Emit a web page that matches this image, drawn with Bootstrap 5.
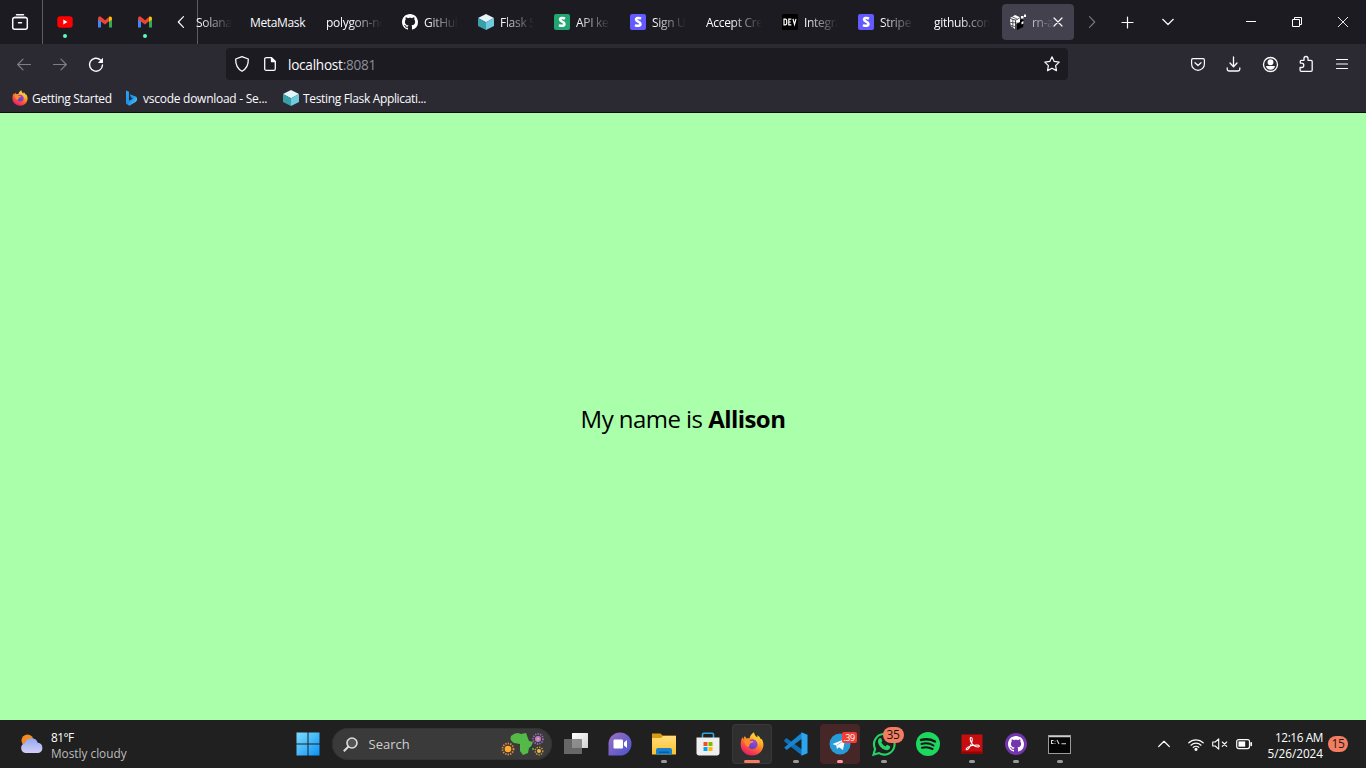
<!DOCTYPE html>
<html lang="en">
<head>
<meta charset="utf-8">
<title>localhost:8081</title>
<meta name="viewport" content="width=device-width, initial-scale=1">
<link href="https://cdn.jsdelivr.net/npm/bootstrap@5.3.0/dist/css/bootstrap.min.css" rel="stylesheet">
<style>
body{font-family:"Open Sans","Noto Sans",sans-serif;font-size:12px;line-height:16px;color:#fbfbfe;background:#afa;height:768px}
svg{display:block;flex:none;overflow:visible}
.ln{fill:none;stroke:#fbfbfe;stroke-width:1.2;stroke-linecap:round;stroke-linejoin:round}
.dim{opacity:.4}
.tabstrip{height:44px;background:#1c1b22}
.overview{width:43px;border-right:1px solid #5b5b60;padding-right:3px}
.pin{width:40px}
.pin i{position:absolute;left:18px;top:34px;width:4px;height:4px;border-radius:50%;background:#54ffbd}
.scroll-l{width:32px}
.pins{padding-left:2px}
.tabs{width:878px;border-left:1px solid #5b5b60}
.tab-item{width:72px;height:36px;margin:0 2px;padding:0 8px;border-radius:4px;gap:6px;flex:none}
.tab-item.first{width:36px;margin-left:-2px;padding:0;margin-right:3px}
.tab-item.active{background:#42414d}
.lbl{overflow:hidden;white-space:nowrap;flex:1 1 0;min-width:0;letter-spacing:-.3px;padding-top:1px}
.fade-r{-webkit-mask-image:linear-gradient(to left,transparent 0,#000 32px);mask-image:linear-gradient(to left,transparent 0,#000 32px)}
.ctl{width:46px}
.toolbar{height:40px;background:#2b2a33;padding:0 6px}
.tool{width:36px;height:36px}
.urlbar{width:842px;height:32px;background:#1c1b22;border-radius:4px;margin-left:112px;margin-right:112px}
.url{font-size:13.6px;letter-spacing:-.25px;font-weight:400;padding-top:1px}
.url span{color:#8f8f98}
.bookmarks{height:29px;background:#2b2a33;border-bottom:1px solid #0c0c0d;padding-left:12px}
.bm{gap:4px;white-space:nowrap;letter-spacing:-.34px}
.bm span{padding-top:2px}
.stage{height:607px;background:#afa;color:#000;font-size:24px;line-height:32px;padding-top:4px;letter-spacing:-.55px}
.taskbar{height:48px;background:#202020;color:#fff}
.app{width:40px;height:40px;border-radius:4px;position:relative}
.app.on{background:#2f2f2f;box-shadow:inset 0 0 0 1px #383838}
.app.alert-on{background:#472627}
.app.run::after{content:"";position:absolute;left:17px;top:36px;width:6px;height:3px;border-radius:2px;background:#9a9a9a}
.app.on::after{left:12px;width:16px;background:#f47d61}
.app.alert-on::after{background:#ff99a4}
.weather{width:287.5px;padding-left:20px;gap:7px;font-size:11.8px}
.weather .deg{letter-spacing:-.5px}
.weather .txt,.clock{padding-top:2px}
.weather .sub{color:#bdbdbd}
.search{width:220px;height:32px;border-radius:16px;background:#3a3a3a;box-shadow:inset 0 0 0 1px #333;padding:0 7px 0 11px;font-size:13px;color:#cfcfcf}
.cnt{position:absolute;font-size:12px;line-height:16px;color:#111;background:#f47d61;border-radius:8px;text-align:center;letter-spacing:-.4px}
.cnt.wa{left:19px;top:3px;width:21px}
.cnt.tg{left:22px;top:8px;width:15px;height:11px;line-height:11px;border-radius:2px;background:#f23c34;color:#fff;font-size:9px}
.clock{font-size:11.8px;width:76px;text-align:right;white-space:nowrap;letter-spacing:-.05px}
.clock .time{letter-spacing:-.4px}
.noti{width:20px;height:16px;border-radius:8px;background:#f47d61;color:#1a1a1a;font-size:12px;letter-spacing:-.4px;line-height:16px;text-align:center}
</style>
</head>
<body class="overflow-hidden d-flex flex-column">
<svg width="0" height="0" class="position-absolute" aria-hidden="true">
<defs>
<linearGradient id="ffo" x1=".85" y1="0" x2=".3" y2="1"><stop offset="0" stop-color="#fff14f"/><stop offset=".35" stop-color="#ffb01f"/><stop offset=".65" stop-color="#ff5a36"/><stop offset="1" stop-color="#e3186e"/></linearGradient>
<linearGradient id="ffp" x1=".7" y1="0" x2=".3" y2="1"><stop offset="0" stop-color="#a34bd8"/><stop offset="1" stop-color="#5940c8"/></linearGradient>
<linearGradient id="win" x1="0" y1="0" x2="1" y2="1"><stop offset="0" stop-color="#7fdcff"/><stop offset="1" stop-color="#0a93f5"/></linearGradient>
<linearGradient id="cl" x1="0" y1="0" x2="0" y2="1"><stop offset="0" stop-color="#8fa9f0"/><stop offset="1" stop-color="#d6cdf8"/></linearGradient>
<linearGradient id="tv" x1="0" y1="0" x2="1" y2="1"><stop offset="0" stop-color="#fff"/><stop offset="1" stop-color="#d0d0d0"/></linearGradient>
<linearGradient id="chat" x1="0" y1="0" x2="1" y2="1"><stop offset="0" stop-color="#9c6fc0"/><stop offset="1" stop-color="#4854cf"/></linearGradient>
<linearGradient id="fold" x1="0" y1="0" x2="0" y2="1"><stop offset="0" stop-color="#ffdd79"/><stop offset="1" stop-color="#fbc02e"/></linearGradient>
<linearGradient id="bing" x1="0" y1="0" x2="1" y2="1"><stop offset="0" stop-color="#2aa7f7"/><stop offset=".5" stop-color="#1f8fee"/><stop offset="1" stop-color="#4fe3e0"/></linearGradient>
<symbol id="firefox" viewBox="0 0 24 24"><path fill="url(#ffo)" d="M12 23.500C5.500 23.500.7 18.800.7 12.500c0-3.300.7-5.500 1.900-7.500l.7 2.200L4.800 4l1.700 2.500c1-.4 2-.4 3-.1.400-2.300 2-4.700 4.500-6.100.2 2.100 1.300 3.600 3.300 5.100.2-.8.100-1.400-.1-2.200 1.900 1 3 2.400 3.700 4.100l.9-.3c1.100 2 1.600 3.800 1.600 5.700C23.400 18.900 18.300 23.500 12 23.500z"/><circle cx="12.500" cy="12.300" r="5" fill="url(#ffp)"/><path fill="#ff8b2d" d="M4.500 8.500c2.400-1 4.700-.6 6.200.4l2.600.2c.2 1.600-1.800 2-3.100 2.500-.9.500-.4 2.400-1.500 3.400C6.500 14.500 4.200 12 4.500 8.500z"/><path fill="#ffc52e" d="M14 2.500c.7 4.500 6.500 5 4.700 11.200-.4-3.400-2-5.700-4.700-6.400-1.200-1.200-1-3.400 0-4.800z"/></symbol>
<symbol id="gmail" viewBox="0 0 16 12"><path fill="#4285f4" d="M1 2v9.500h3V5z"/><path fill="#34a853" d="M15 2v9.500h-3V5z"/><path fill="#ea4335" d="M1 2.800C1 .5 3 .2 4.100 1L8 4.200 12 1v4.300L8 8.400 1 3.400z"/><path fill="#fbbc04" d="M12 1c1.300-1 3-.3 3 1.500v1L12 6z"/></symbol>
<symbol id="cube" viewBox="0 0 16 16"><path fill="#e2f5fb" d="M8 0 16 4 8 8.300 0 4z"/><path fill="#399fa8" d="M0 4l8 4.300V16L0 12z"/><path fill="#6fcbdc" d="M16 4 8 8.300V16l8-4z"/></symbol>
<symbol id="octo" viewBox="0 0 16 16"><path fill="#fff" d="M8 0C3.580 0 0 3.580 0 8c0 3.540 2.290 6.530 5.470 7.590.4.070.55-.17.55-.38 0-.19-.01-.82-.01-1.490-2.010.37-2.530-.49-2.690-.94-.09-.23-.48-.94-.82-1.130-.28-.15-.68-.52-.01-.53.63-.01 1.080.58 1.230.82.72 1.210 1.870.87 2.330.66.07-.52.28-.87.51-1.070-1.780-.2-3.640-.89-3.640-3.950 0-.87.31-1.590.82-2.150-.08-.2-.36-1.020.08-2.120 0 0 .67-.21 2.200.82.64-.18 1.320-.27 2-.27s1.360.09 2 .27c1.530-1.040 2.200-.82 2.200-.82.44 1.100.16 1.920.08 2.120.51.56.82 1.270.82 2.150 0 3.070-1.870 3.750-3.650 3.950.29.25.54.73.54 1.480 0 1.070-.01 1.930-.01 2.200 0 .21.15.46.55.38A8.010 8.010 0 0 0 16 8c0-4.420-3.580-8-8-8z"/></symbol>
<symbol id="sletter" viewBox="0 0 16 16"><rect width="16" height="16" rx="2"/><path fill="none" stroke="#fff" stroke-width="2.500" d="M11 4.700C9 3.600 6 3.700 6 5.600c0 2.200 4.500 1.900 4.500 4.400 0 2.200-3.300 2.200-5.500 1.100"/></symbol>
</defs></svg>

<header class="tabstrip d-flex align-items-center">
 <div class="overview h-100 d-flex align-items-center justify-content-center"><svg width="16" height="16" class="ln" style="stroke-width:1.500"><path d="M4.500.7h7M2.500 3.500h11"/><rect x=".7" y="3.500" width="14.600" height="11.700" rx="2"/><path d="M6.500 8.800h3"/></svg></div>
 <div class="pins d-flex h-100">
  <div class="pin position-relative d-flex align-items-center justify-content-center"><svg width="16" height="12"><rect x=".3" y=".2" width="15.400" height="11.600" rx="3" fill="#f00"/><path fill="#fff" d="M6.300 3.500v5L10.500 6z"/></svg><i></i></div>
  <div class="pin d-flex align-items-center justify-content-center"><svg width="16" height="12"><use href="#gmail"/></svg></div>
  <div class="pin position-relative d-flex align-items-center justify-content-center"><svg width="16" height="12"><use href="#gmail"/></svg><i></i></div>
 </div>
 <div class="scroll-l d-flex justify-content-center"><svg width="8" height="12" class="ln"><path d="M6.500.7 1.300 6l5.200 5.300"/></svg></div>
 <nav class="tabs d-flex align-items-center h-100">
  <div class="tab-item first d-flex align-items-center"><span class="lbl fade-r">Solana</span></div>
  <div class="tab-item d-flex align-items-center" style="margin-left:7px"><span class="lbl" style="letter-spacing:-.35px">MetaMask</span></div>
  <div class="tab-item d-flex align-items-center"><span class="lbl fade-r">polygon-node</span></div>
  <div class="tab-item d-flex align-items-center"><svg width="16" height="16"><use href="#octo"/></svg><span class="lbl fade-r">GitHub</span></div>
  <div class="tab-item d-flex align-items-center"><svg width="16" height="16"><use href="#cube"/></svg><span class="lbl fade-r">Flask Stripe</span></div>
  <div class="tab-item d-flex align-items-center"><svg width="16" height="16" fill="#22a671"><use href="#sletter"/></svg><span class="lbl fade-r">API keys</span></div>
  <div class="tab-item d-flex align-items-center"><svg width="16" height="16" fill="#635bff"><use href="#sletter"/></svg><span class="lbl fade-r">Sign Up</span></div>
  <div class="tab-item d-flex align-items-center"><span class="lbl fade-r">Accept Credit</span></div>
  <div class="tab-item d-flex align-items-center"><svg width="16" height="16"><rect width="16" height="16" rx="1"/><path fill="none" stroke="#fff" stroke-width="1.200" d="M2 5.200v5.600h1.200q1.500 0 1.500-1.500V6.700q0-1.500-1.500-1.500zM9.300 5.200H6.800v5.600h2.500M6.800 8h2M11 4.800l1.500 5.700L14 4.800"/></svg><span class="lbl fade-r">Integrate</span></div>
  <div class="tab-item d-flex align-items-center"><svg width="16" height="16" fill="#635bff"><use href="#sletter"/></svg><span class="lbl fade-r">Stripe API</span></div>
  <div class="tab-item d-flex align-items-center"><span class="lbl fade-r">github.com</span></div>
  <div class="tab-item active d-flex align-items-center"><svg width="16" height="16"><path fill="#000" d="M7 8l5-3 2 2-1 6-6 3z"/><path fill="#fff" d="M0 4 5 1l5 2.200-4 2.600zM0 5l5 1.600V15L.7 12zM6 6.600 10 4v4L6 10zM11 2h2.500v2.500H11zM14 .5h2V3h-2zM11.500 8l2-1v2.500l-2 1z"/><path stroke="#222" stroke-width=".7" fill="none" d="M.3 8.400l9.500 1M2.800 5.600v8M2 2.700l5.500 2.500M0 11l5 1.600"/></svg><span class="lbl fade-r" style="margin-right:-8px">rn-a</span><svg width="10" height="10" class="ln" style="margin-right:3px"><path d="M1 1l8 8M9 1 1 9"/></svg></div>
 </nav>
 <div class="d-flex justify-content-center dim" style="width:34px"><svg width="8" height="12" class="ln"><path d="M1.500.7 6.700 6l-5.200 5.300"/></svg></div>
 <div class="d-flex justify-content-center" style="width:38px"><svg width="12" height="12" class="ln" style="margin-top:1px"><path d="M5.500 0v11M0 5.500h11"/></svg></div>
 <div class="d-flex justify-content-center" style="width:42px"><svg width="12" height="8" class="ln"><path d="M.7 1.300 6 6.500l5.300-5.200"/></svg></div>
 <div class="ms-auto d-flex">
  <div class="ctl d-flex justify-content-center"><svg width="10" height="10" stroke="#fff"><path d="M0 4.500h10"/></svg></div>
  <div class="ctl d-flex justify-content-center"><svg width="10" height="10" stroke="#fff" fill="none"><path d="M.5 2.500h7v7h-7zM2.500 2.500v-2h7v7h-2"/></svg></div>
  <div class="ctl d-flex justify-content-center"><svg width="10" height="10" stroke="#fff" stroke-width=".9"><path d="M0 0l10 10M10 0 0 10"/></svg></div>
 </div>
</header>

<div class="toolbar d-flex align-items-center">
 <div class="tool dim d-flex align-items-center justify-content-center"><svg width="14" height="12" class="ln"><path d="M13.500 6.500H.7M6 1.200.7 6.500 6 11.800"/></svg></div>
 <div class="tool dim d-flex align-items-center justify-content-center"><svg width="14" height="12" class="ln"><path d="M.5 6.500h12.800M8 1.200l5.300 5.300L8 11.800"/></svg></div>
 <div class="tool d-flex align-items-center justify-content-center"><svg width="14" height="14" class="ln" style="stroke-width:1.400"><path d="M13.500 8A6.500 6.500 0 1 1 11.500 3"/><path fill="#fbfbfe" stroke="none" d="M14 .8v5.200H8.800z"/></svg></div>
 <div class="urlbar d-flex align-items-center">
  <svg width="14" height="16" class="ln" style="margin-left:9px;stroke-width:1.300"><path d="M7 .7 13.300 3c.2 5.500-1.300 9.500-6.300 12.300C2 12.500.5 8.500.7 3z"/></svg>
  <svg width="12" height="14" class="ln" style="margin-left:15px;stroke-width:1.300"><path d="M2.500.7h5L11.300 4.500v7.200q0 1.600-1.600 1.600H2.300Q.7 13.300.7 11.700V2.300Q.7.7 2.500.7z"/><path fill="#fbfbfe" d="M7.500 1v3.500H11z"/></svg>
  <div class="url" style="margin-left:12px">localhost<span>:8081</span></div>
  <svg width="16" height="16" class="ln ms-auto me-2"><path d="M8 .8l2.200 4.600 5 .7-3.600 3.500.9 5L8 12.200l-4.500 2.400.9-5L.8 6.100l5-.7z"/></svg>
 </div>
 <div class="tool d-flex align-items-center justify-content-center"><svg width="14" height="13" class="ln"><path d="M1.800.7h10.400q1.200 0 1.200 1.200v4a6.400 6.400 0 0 1-12.800 0v-4Q.6.7 1.800.7zM4 4.700l3 2.800 3-2.800"/></svg></div>
 <div class="tool d-flex align-items-center justify-content-center"><svg width="14" height="15" class="ln" style="stroke-width:1.300"><path d="M6.500 0v9.500M3 6l3.500 3.700L10 6M.2 11v1.200q0 1.800 1.800 1.800h9q1.800 0 1.800-1.800V11"/></svg></div>
 <div class="tool d-flex align-items-center justify-content-center"><svg width="16" height="16" class="ln" style="stroke-width:1.300"><circle cx="8.500" cy="8.500" r="7"/><circle cx="8.500" cy="6.200" r="2.300" fill="#fbfbfe"/><path fill="#fbfbfe" stroke="none" d="M4 10h9q-.8 3.800-4.500 3.800T4 10z"/></svg></div>
 <div class="tool d-flex align-items-center justify-content-center"><svg width="14" height="16" class="ln" style="stroke-width:1.300"><path d="M1.300 7V5.200Q1.300 4.300 2.200 4.300H5V2.500a2 2 0 0 1 4 0V4.300h3q1.200 0 1.200 1.200v8.600q0 1.200-1.200 1.200H2.300Q1.100 15.300 1.100 14v-2.500h1.500a2.200 2.200 0 0 0 0-4.400z"/></svg></div>
 <div class="tool d-flex align-items-center justify-content-center"><svg width="12" height="10" class="ln" style="stroke-width:1.200"><path d="M.5.500h11M.5 5h11M.5 9.500h11"/></svg></div>
</div>

<div class="bookmarks d-flex align-items-center">
 <div class="bm d-flex align-items-center" style="width:111px"><svg width="16" height="16"><use href="#firefox"/></svg><span>Getting Started</span></div>
 <div class="bm d-flex align-items-center" style="width:160px;letter-spacing:-.26px"><svg width="16" height="16"><path fill="url(#bing)" d="M3 .5l3 1.200v9l4-2.200-2-1-1.200-3.200 6 2.200q1.700.8 1.300 3.300-.2 1.500-1.500 2.200L6.300 15.700 3 13.500z"/></svg><span>vscode download - Se...</span></div>
 <div class="bm d-flex align-items-center"><svg width="16" height="16"><use href="#cube"/></svg><span>Testing Flask Applicati...</span></div>
</div>

<main class="stage d-flex align-items-center justify-content-center"><div>My name is <strong>Allison</strong></div></main>

<footer class="taskbar d-flex align-items-center">
 <div class="weather d-flex align-items-center">
  <svg width="24" height="20"><circle cx="7.500" cy="6.500" r="6" fill="#f58b20"/><path fill="url(#cl)" d="M5.500 19a5 5 0 0 1-.6-9.800 6.800 6.800 0 0 1 12.900-.5A5.200 5.200 0 0 1 18 19z"/></svg>
  <div class="txt"><div class="deg">81°F</div><div class="sub">Mostly cloudy</div></div>
 </div>
 <div class="d-flex align-items-center gap-1">
  <div class="app d-flex align-items-center justify-content-center"><svg width="24" height="24" fill="url(#win)"><path d="M.5.500h11v11h-11zM12.500.500h11v11h-11zM.5 12.500h11v11h-11zM12.500 12.500h11v11h-11z"/></svg></div>
  <div class="search d-flex align-items-center"><svg width="15" height="15" fill="none" stroke="#ddd" stroke-width="1.600"><circle cx="9" cy="6" r="5" fill="#555"/><path stroke-width="2" d="M5.500 9.500.8 14.200"/></svg><span style="margin-left:11px">Search</span>
   <svg class="ms-auto" width="44" height="24"><path fill="#55b948" d="M10 4q3-3 7-3l3 1 5-1 3 8 4 1q-1 4-4 6l-1 5-5 2-3-4v-7l-6-1q-5-3-3-7z"/><g fill="none" stroke-dasharray="1.300 1.200"><circle cx="7" cy="17" r="5.500" stroke="#e88b3c" stroke-width="1.800"/><circle cx="37" cy="7" r="5" stroke="#9b68b5" stroke-width="1.800"/><circle cx="38" cy="19" r="3.800" stroke="#c99a37" stroke-width="1.500"/></g><circle cx="7" cy="17" r="3.300" fill="#ffab2e"/><circle cx="37" cy="7" r="3" fill="#b980d0"/><circle cx="37" cy="7" r="1.200" fill="#f4a261"/><circle cx="38" cy="19" r="2" fill="#f0b94a"/><circle cx="32" cy="17" r="1" fill="#55b948"/></svg>
  </div>
  <div class="app d-flex align-items-center justify-content-center"><svg width="24" height="24"><rect x="8" y="1" width="16" height="15" rx=".5" fill="url(#tv)"/><rect y="7" width="18" height="15" rx=".5" fill="#777" opacity=".82"/></svg></div>
  <div class="app d-flex align-items-center justify-content-center"><svg width="24" height="24"><path fill="url(#chat)" d="M.5 23.500V12A11.500 11.500 0 1 1 12 23.500z"/><rect x="5.500" y="7.500" width="9.500" height="9" rx="1" fill="#fff"/><path fill="#fff" d="M16 10.500 19 8v8l-3-2.500z"/></svg></div>
  <div class="app run d-flex align-items-center justify-content-center"><svg width="24" height="24"><path fill="#d99b10" d="M0 1.500h8.500l2 2H24V7H0z"/><path fill="url(#fold)" d="M0 6h9l2-2h13v18.500H0z"/><path fill="#1681d1" d="M4 22.500V18q0-2 2-2h12q2 0 2 2v4.500z"/><path fill="#0c5a9d" d="M7 19.500h10v1.500H7z"/></svg></div>
  <div class="app d-flex align-items-center justify-content-center"><svg width="24" height="24"><path fill="none" stroke="#2da9e0" stroke-width="1.600" d="M6.500 6V2.500q0-1.200 1.200-1.200h8.600q1.200 0 1.200 1.200V6"/><path fill="#efefef" d="M.5 5.500h23v15.300q0 2.700-2.700 2.700H3.200Q.5 23.500.5 20.800z"/><path fill="#f25022" d="M7.500 10h4v4h-4z"/><path fill="#7fba00" d="M12.500 10h4v4h-4z"/><path fill="#00a4ef" d="M7.500 15h4v4h-4z"/><path fill="#ffb900" d="M12.500 15h4v4h-4z"/></svg></div>
  <div class="app run on d-flex align-items-center justify-content-center"><svg width="24" height="24"><use href="#firefox"/></svg></div>
  <div class="app run d-flex align-items-center justify-content-center"><svg width="24" height="24"><path fill="#0d6fb8" d="M.3 8 2.500 6 18 17.500v6L.3 9.500z"/><path fill="#1586cf" d="M.3 15.500 18 .500v6.300L2.500 18z"/><path fill="#2ca5ef" d="M17.500.3l6 2.500v18.400l-6 2.600z"/></svg></div>
  <div class="app run alert-on d-flex align-items-center justify-content-center"><svg width="22" height="22"><circle cx="11" cy="11" r="10.500" fill="#279bd6"/><path fill="#fff" d="M3.500 11 16 6l-2 11-4-2.800-2 1.800-.8-3.500z"/><path stroke="#8fc9e9" d="M7.500 12.500 14 8"/></svg><span class="cnt tg">.39</span></div>
  <div class="app run d-flex align-items-center justify-content-center"><svg width="24" height="24"><path fill="none" stroke="#25d366" stroke-width="2.100" d="M1.500 22.700l1.600-5.800A10.300 10.300 0 1 1 7 21.100z"/><path fill="#25d366" d="M7 6.500q1.500-1 2.300 0l1 2.500-1 1.600q1.500 2.700 4.200 3.800l1.600-1.700 3 1.500q.5 2.800-2.300 3.800Q12 19 8 14.500 4.500 10 7 6.500z"/></svg><span class="cnt wa">35</span></div>
  <div class="app d-flex align-items-center justify-content-center"><svg width="24" height="24"><circle cx="12" cy="12" r="12" fill="#1ed760"/><path fill="none" stroke="#161616" stroke-linecap="round" stroke-width="2.400" d="M5 8q7.500-2 14 1.500"/><path fill="none" stroke="#161616" stroke-linecap="round" stroke-width="2" d="M5.500 12q6.500-1.800 12 1.500M6 15.800q5.500-1.400 10.500 1.200"/></svg></div>
  <div class="app run d-flex align-items-center justify-content-center"><svg width="22" height="22"><path fill="#c70d10" d="M.5 1.500h21v19H.5z"/><path fill="#900" d="M.5 18.500h21v2H.5z"/><path fill="none" stroke="#fff" stroke-width="1.100" d="M10.300 4.500c-1-.3-1.300 1-.8 3 .9 3.500 4 6.500 7.500 6.500 2.200-.2 1.500-2-.9-2-3.600 0-7.400 1-9.600 2.400-2 1.300-1.600 2.900-.2 2.200 2-1.100 4.500-6.300 5-9.500.1-1.400-.2-2.400-1-2.600z"/></svg></div>
  <div class="app run d-flex align-items-center justify-content-center"><svg width="22" height="22"><circle cx="11" cy="11" r="11" fill="#7435ad"/><svg x="3" y="3" width="16" height="16"><use href="#octo"/></svg></svg></div>
  <div class="app run d-flex align-items-center justify-content-center"><svg width="24" height="19"><rect x=".5" y=".5" width="22" height="18" fill="#050505" stroke="#9a9a9a"/><path stroke="#ccc" stroke-width="1.500" d="M1 1.500h21"/><path stroke="#d8d8d8" stroke-width="1.100" fill="none" d="M5.500 5.500H3.500v3h2M7 5.800v.8M7 8v.8M9 5l2 4M13.500 8.800H18"/></svg></div>
 </div>
 <div class="ms-auto d-flex align-items-center" style="padding-right:18px">
  <svg width="12" height="8" class="ln"><path d="M.7 6.500 6 1.300l5.300 5.200"/></svg>
  <svg width="16" height="13" class="ln" style="margin-left:18px"><path d="M.8 4.800a10.300 10.300 0 0 1 14.400 0M3 7.200a7.200 7.200 0 0 1 10 0M5.200 9.400a4 4 0 0 1 5.600 0"/><circle cx="8" cy="11.300" r="1" fill="#fff"/></svg>
  <svg width="16" height="12" class="ln" style="margin-left:8px;stroke-width:1.100"><path d="M.7 4v4h2.500l3.500 3.200V.8L3.200 4zM10.300 4l4.400 4.400M14.700 4l-4.400 4.400"/></svg>
  <svg width="16" height="10" class="ln" style="margin-left:8px"><rect x=".7" y=".6" width="12.800" height="9" rx="2"/><rect x="2.500" y="2.400" width="6.700" height="5.300" fill="#fff" stroke="none"/><path stroke-width="1.700" d="M15.200 3.800v2.500"/></svg>
  <div class="clock" style="margin-left:-5px"><div class="time">12:16 AM</div><div>5/26/2024</div></div>
  <div class="noti" style="margin-left:5px">15</div>
 </div>
</footer>
<script src="https://cdn.jsdelivr.net/npm/bootstrap@5.3.0/dist/js/bootstrap.bundle.min.js"></script>
</body>
</html>
